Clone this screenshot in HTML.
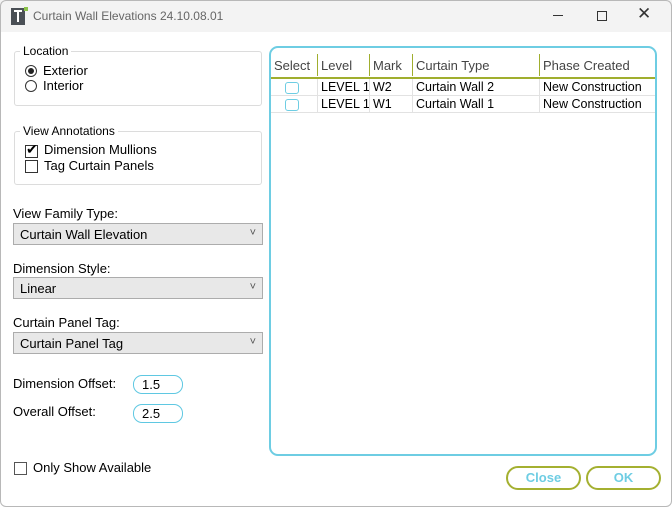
<!DOCTYPE html><html><head><style>
*{box-sizing:border-box;margin:0;padding:0}
body{width:672px;height:507px;background:#fff;font-family:"Liberation Sans",sans-serif;font-size:13px;color:#000;position:relative;overflow:hidden}
.frame{position:absolute;left:0;top:0;width:672px;height:507px;border:1px solid #b8b8b8;border-radius:6px;pointer-events:none;z-index:5}
.tb{position:absolute;left:0;top:0;width:672px;height:32px;background:#f3f3f3}
.a{position:absolute;white-space:nowrap}
.grp{position:absolute;border:1px solid #dcdcdc;border-radius:3px}
.lg{position:absolute;background:#fff;padding:0 3px;font-size:12px;top:-8px;left:5px}
.cb{position:absolute;width:13px;height:13px;border:1px solid #333;background:#fff}
.rb{position:absolute;width:12px;height:12px;border:1px solid #333;border-radius:50%;background:#fff}
.sel{position:absolute;left:13px;width:250px;height:22px;border:1px solid #acacac;background:#e8e8e8;padding:3px 6px;font-size:13px}
.sel:after{content:"˅";position:absolute;right:6px;top:3px;font-size:11px;color:#555}
.inp{position:absolute;left:133px;width:50px;height:19px;border:1px solid #5fc8e2;border-radius:9px;padding:1px 8px;font-size:13px}
.grid{position:absolute;left:269px;top:46px;width:388px;height:410px;border:2px solid #6ecde3;border-radius:9px;overflow:hidden}
.c{position:absolute;border-right:1px solid #e2e2e2;white-space:nowrap;padding-left:3px;font-size:12.5px;height:17px;line-height:17px;overflow:hidden}
.h{color:#444;border-right:1px solid #a0ae2e;height:22px;line-height:24px;top:6px;font-size:13px}
.btn{position:absolute;top:466px;height:24px;border:2px solid #a4b030;border-radius:12px;color:#6ecde3;font-weight:bold;text-align:center;line-height:20px;font-size:13px}
</style></head><body>
<div class="frame"></div>
<div class="tb"></div>
<div class="a" style="left:11px;top:8px;width:14px;height:17px;background:#4a4f55"></div>
<div class="a" style="left:14px;top:10px;width:8px;height:2px;background:#fff"></div>
<div class="a" style="left:17px;top:10px;width:2px;height:12px;background:#fff"></div>
<div class="a" style="left:24px;top:7px;width:4px;height:4px;background:#8bc34a"></div>
<div class="a" style="left:33px;top:9px;font-size:12px;color:#666">Curtain Wall Elevations 24.10.08.01</div>
<div class="a" style="left:553px;top:15px;width:10px;height:1px;background:#333"></div>
<div class="a" style="left:597px;top:11px;width:10px;height:10px;border:1px solid #333"></div>
<div class="a" style="left:637px;top:4px;font-size:17px;color:#333">✕</div>

<div class="grp" style="left:14px;top:51px;width:248px;height:55px"><span class="lg">Location</span></div>
<div class="rb" style="left:25px;top:65px"></div><div class="a" style="left:28px;top:68px;width:6px;height:6px;border-radius:50%;background:#222"></div>
<div class="a" style="left:43px;top:63px">Exterior</div>
<div class="rb" style="left:25px;top:80px"></div>
<div class="a" style="left:43px;top:78px">Interior</div>

<div class="grp" style="left:14px;top:131px;width:248px;height:54px"><span class="lg">View Annotations</span></div>
<div class="cb" style="left:25px;top:145px"></div><div class="a" style="left:26px;top:141px;font-size:14px">✔</div>
<div class="a" style="left:44px;top:142px">Dimension Mullions</div>
<div class="cb" style="left:25px;top:160px"></div>
<div class="a" style="left:44px;top:158px">Tag Curtain Panels</div>

<div class="a" style="left:13px;top:206px">View Family Type:</div>
<div class="sel" style="top:223px">Curtain Wall Elevation</div>
<div class="a" style="left:13px;top:261px">Dimension Style:</div>
<div class="sel" style="top:277px">Linear</div>
<div class="a" style="left:13px;top:315px">Curtain Panel Tag:</div>
<div class="sel" style="top:332px">Curtain Panel Tag</div>

<div class="a" style="left:13px;top:376px">Dimension Offset:</div>
<div class="inp" style="top:375px">1.5</div>
<div class="a" style="left:13px;top:404px">Overall Offset:</div>
<div class="inp" style="top:404px">2.5</div>

<div class="cb" style="left:14px;top:462px;border-color:#555"></div>
<div class="a" style="left:33px;top:460px">Only Show Available</div>

<div class="grid">
<div class="c h" style="left:0;width:47px">Select</div>
<div class="c h" style="left:47px;width:52px">Level</div>
<div class="c h" style="left:99px;width:43px">Mark</div>
<div class="c h" style="left:142px;width:127px">Curtain Type</div>
<div class="c h" style="left:269px;width:116px;border-right:none">Phase Created</div>
<div class="a" style="left:0;top:29px;width:385px;height:2px;background:#a0ae2e"></div>
<div class="a" style="left:0;top:31px;width:385px;height:17px;border-bottom:1px solid #e2e2e2"></div>
<div class="a" style="left:0;top:48px;width:385px;height:17px;border-bottom:1px solid #e2e2e2"></div>
<div class="c" style="top:31px;left:0;width:47px"></div><div class="a" style="left:14px;top:34px;width:14px;height:12px;border:1px solid #6ecde3;border-radius:3px"></div>
<div class="c" style="top:31px;left:47px;width:52px">LEVEL 1</div>
<div class="c" style="top:31px;left:99px;width:43px">W2</div>
<div class="c" style="top:31px;left:142px;width:127px">Curtain Wall 2</div>
<div class="c" style="top:31px;left:269px;width:116px">New Construction</div>
<div class="c" style="top:48px;left:0;width:47px"></div><div class="a" style="left:14px;top:51px;width:14px;height:12px;border:1px solid #6ecde3;border-radius:3px"></div>
<div class="c" style="top:48px;left:47px;width:52px">LEVEL 1</div>
<div class="c" style="top:48px;left:99px;width:43px">W1</div>
<div class="c" style="top:48px;left:142px;width:127px">Curtain Wall 1</div>
<div class="c" style="top:48px;left:269px;width:116px">New Construction</div>
</div>

<div class="btn" style="left:506px;width:75px">Close</div>
<div class="btn" style="left:586px;width:75px">OK</div>
</body></html>
